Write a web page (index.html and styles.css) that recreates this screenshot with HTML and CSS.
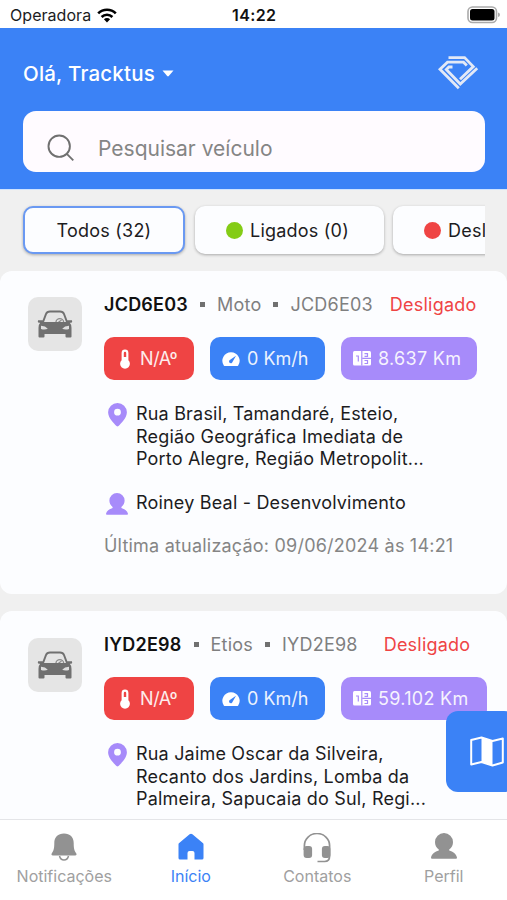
FILE: index.html
```html
<!DOCTYPE html>
<html lang="pt-BR">
<head>
<meta charset="utf-8">
<title>Veículos</title>
<link rel="stylesheet" href="styles.css">
</head>
<body>
<svg class="defs" aria-hidden="true">
  <symbol id="car" viewBox="0 0 36 28">
    <path fill="none" stroke="#707070" stroke-width="2" d="M6 12 9 4Q10 1.500 13 1.500H23Q26 1.500 27 4L30 12"/>
    <path fill="none" stroke="#8a8a8a" stroke-width="1.300" d="M19 12a3.800 3.300 0 0 1 7.600 0M21.500 12l3-1.800"/>
    <path fill="#707070" d="M1 10.300h4.500L7 12h22l1.500-1.700H35q.7 2.300-.7 2.500h-1.500q1.700 1.700 1.700 5v8.700q0 1-1 1h-4q-1 0-1-1V24h-21v2.500q0 1-1 1h-4q-1 0-1-1V17.800q0-3.300 1.700-5H1.700Q.3 12.600 1 10.300z"/>
    <path fill="#dedede" d="M4 15.800q4.500.2 6.800 3-3 1.300-6.800.2zM32 15.800q-4.500.2-6.800 3 3 1.300 6.800.2z"/>
  </symbol>
  <symbol id="thermo" viewBox="0 0 12 20">
    <path fill="#fff" d="M6 .5a3.400 3.400 0 0 0-3.400 3.400v7.300a4.900 4.900 0 1 0 6.800 0V3.900A3.400 3.400 0 0 0 6 .5z"/>
    <path fill="#ef4444" d="M4.800 3.900a1.200 1.200 0 0 1 2.400 0V8H4.800z"/>
  </symbol>
  <symbol id="gauge" viewBox="0 0 18 16">
    <path fill="#fff" d="M9 1.200a8.600 8.600 0 0 0-7.200 13.300q.5.500 1.200.5h12q.8 0 1.200-.5A8.600 8.600 0 0 0 9 1.200z"/>
    <path fill="#3b82f6" d="M14 4.800 10.600 10.800a1.800 1.800 0 1 1-2.400-2z"/>
  </symbol>
  <symbol id="odo" viewBox="0 0 18 15">
    <rect width="18" height="14.500" rx="1.500" fill="#fff"/>
    <path fill="none" stroke="#a78bfa" stroke-width="1.200" d="M3 5h2.300v5.500M8.800 0v14.500M11.500 2.700h3v2.600h-3M9.500 7.300H18M11.500 9.500h3v3h-3"/>
  </symbol>
  <symbol id="pin" viewBox="0 0 19 24">
    <path fill="#a78bfa" fill-rule="evenodd" d="M9.500 0A9.400 9.400 0 0 0 .1 9.300C.1 15 6 20.500 8.500 23q1 .8 2 0c2.500-2.500 8.400-8 8.400-13.700A9.400 9.400 0 0 0 9.500 0zm0 5.800a3.400 3.400 0 1 1 0 6.800 3.400 3.400 0 0 1 0-6.800z"/>
  </symbol>
  <symbol id="person" viewBox="0 0 26 26">
    <path fill="currentColor" d="M13 0a9 9 0 0 0-9 9c0 3 1.200 5.700 3.800 7.600v1C4 18.800.8 21 0 24.500q0 1.300 1 1.300h24q1 0 1-1.300c-.8-3.500-4-5.700-7.800-6.900v-1C20.800 14.700 22 12 22 9a9 9 0 0 0-9-9z"/>
  </symbol>
</svg>
<div class="app">
  <div class="status">
    <span class="carrier">Operadora</span>
    <svg class="wifi" viewBox="0 0 20 15"><g fill="none" stroke="#000" stroke-width="2.600"><path d="M1.200 5.400a12.500 12.500 0 0 1 17.600 0"/><path d="M4.600 9a7.700 7.700 0 0 1 10.800 0"/></g><path d="M10 14.500 6.900 11.300a4.400 4.400 0 0 1 6.200 0z"/></svg>
    <b class="clock">14:22</b>
    <svg class="battery" viewBox="0 0 34 18"><rect x="1" y="1" width="28.500" height="15.500" rx="4.500" fill="#fff" stroke="#aaa" stroke-width="1.600"/><rect x="3" y="3" width="24.500" height="11.500" rx="2.500"/><path fill="#aaa" d="M31 6.500q2 .6 2 2.300t-2 2.300z"/></svg>
  </div>
  <header class="header">
    <div class="hello">
      <span class="user">Olá, Tracktus</span>
      <svg class="caret" viewBox="0 0 12 7"><path fill="#fff" d="M.5.500h11L6.800 6q-.8.800-1.600 0z"/></svg>
      <svg class="logo" viewBox="0 0 42 36"><g fill="none" stroke="#e3e9f6" stroke-width="2.800"><path d="M11.500 2.600H27.600L36.300 11.600 23 24.300"/><path d="M29.800 10.500 26.500 7.200H10.500L3 14.300 21.800 33.200"/><path d="M40.200 13.200 23.300 29 9.300 14.600 11.900 12H15.500"/></g></svg>
    </div>
    <div class="search">
      <svg class="lens" viewBox="0 0 28 28"><g fill="none" stroke="#707070" stroke-width="1.900"><circle cx="12.200" cy="12.200" r="10.700"/><path d="m19.800 19.800 6.500 6.500"/></g></svg>
      <span class="placeholder">Pesquisar veículo</span>
    </div>
  </header>
  <div class="filters">
    <div class="chip chip-all"><span>Todos (32)</span></div>
    <div class="chip chip-on"><i class="dot green"></i><span>Ligados (0)</span></div>
    <div class="chip chip-off"><i class="dot red"></i><span>Desligados (32)</span></div>
  </div>
  <main class="list">
    <article class="card">
      <div class="thumb"><svg><use href="#car"/></svg></div>
      <div class="body">
        <div class="title"><b>JCD6E03</b><i></i><span>Moto</span><i></i><span class="plate">JCD6E03</span><em>Desligado</em></div>
        <div class="tags">
          <div class="tag temp"><svg><use href="#thermo"/></svg><span>N/Aº</span></div>
          <div class="tag speed"><svg><use href="#gauge"/></svg><span>0 Km/h</span></div>
          <div class="tag km"><svg><use href="#odo"/></svg><span>8.637 Km</span></div>
        </div>
        <div class="row"><svg class="pin"><use href="#pin"/></svg><p>Rua Brasil, Tamandaré, Esteio,<br>Região Geográfica Imediata de<br>Porto Alegre, Região Metropolit...</p></div>
        <div class="row driver"><svg class="face"><use href="#person"/></svg><p>Roiney Beal - Desenvolvimento</p></div>
        <div class="updated">Última atualização: 09/06/2024 às 14:21</div>
      </div>
    </article>
    <article class="card second">
      <div class="thumb"><svg><use href="#car"/></svg></div>
      <div class="body">
        <div class="title"><b>IYD2E98</b><i></i><span>Etios</span><i></i><span class="plate">IYD2E98</span><em>Desligado</em></div>
        <div class="tags">
          <div class="tag temp"><svg><use href="#thermo"/></svg><span>N/Aº</span></div>
          <div class="tag speed"><svg><use href="#gauge"/></svg><span>0 Km/h</span></div>
          <div class="tag km wide"><svg><use href="#odo"/></svg><span>59.102 Km</span></div>
        </div>
        <div class="row"><svg class="pin"><use href="#pin"/></svg><p>Rua Jaime Oscar da Silveira,<br>Recanto dos Jardins, Lomba da<br>Palmeira, Sapucaia do Sul, Regi...</p></div>
      </div>
    </article>
  </main>
  <nav class="nav">
    <div class="tab"><svg class="bell" viewBox="0 0 26 28"><path fill="currentColor" d="M13 .5c-6 0-9.700 3.700-9.700 9.500 0 5-.5 7.500-2.500 10.300-.8 1.300-.2 2.200 1 2.200h22.400c1.200 0 1.800-.9 1-2.200-2-2.800-2.500-5.300-2.500-10.300C22.700 4.200 19 .5 13 .5z"/><path fill="none" stroke="currentColor" stroke-width="1.500" d="M8.500 23q1 4 4.500 4t4.500-4"/></svg><span>Notificações</span></div>
    <div class="tab active"><svg viewBox="0 0 26 28"><path fill="currentColor" d="M11.600 1.200.9 10.200q-.4.400-.4 1V25q0 1.500 1.500 1.500h7.500V20q0-2 2-2h3q2 0 2 2v6.500H24q1.500 0 1.500-1.500V11.200q0-.6-.4-1L14.400 1.200q-1.400-1.100-2.800 0z"/></svg><span>Início</span></div>
    <div class="tab"><svg class="phones" viewBox="0 0 28 30"><path fill="none" stroke="currentColor" stroke-width="1.700" d="M1.400 17v-4.500a12.600 12 0 0 1 25.200 0V23q0 5.500-5 5.500H14.500"/><rect x=".6" y="13" width="8.500" height="12" rx="3" fill="currentColor"/><rect x="18.900" y="13" width="8.500" height="12" rx="3" fill="currentColor"/></svg><span>Contatos</span></div>
    <div class="tab"><svg class="profile"><use href="#person"/></svg><span>Perfil</span></div>
  </nav>
  <div class="fab"><svg viewBox="0 0 34 31"><path fill="none" stroke="#fff" stroke-width="2" stroke-linejoin="round" d="M1.200 4 11.500 1.500 22.500 5 32.800 2.500V26.500L22.500 29.500 11.500 26 1.200 28.500z"/><path fill="#fff" d="M11.500 1.500 22.500 5v24.500l-11-3.500z"/></svg></div>
</div>
</body>
</html>
```
FILE: styles.css
```css
* { box-sizing: border-box; }
body { margin: 0; font-family: Inter, "Liberation Sans", sans-serif; }
p { margin: 0; }
svg { display: block; flex: none; }
.defs { position: absolute; width: 0; height: 0; }
.app { position: relative; width: 507px; height: 900px; overflow: hidden; display: flex; flex-direction: column; background: #f0f0f0; color: #1c1c1e; white-space: nowrap; }

.status { flex: none; height: 28px; display: grid; grid-template-columns: 81px 20px 1fr 34px; column-gap: 6px; padding: 2px 6px 0 10px; align-items: center; background: #fff; font-size: 16px; }
.carrier { letter-spacing: 0.05px; }
.wifi { width: 20px; height: 15px; }
.clock { padding-left: 109px; color: #111; font-weight: 600; letter-spacing: 0.4px; }
.battery { width: 34px; height: 18px; }

.header { flex: none; height: 162px; padding: 27px 22px 0 23px; background: #3b82f6; border-bottom: 1px solid #cfe3ff; }
.hello { display: flex; align-items: center; height: 36px; color: #fff; }
.user { font-size: 20.500px; font-weight: 500; letter-spacing: 0.2px; }
.caret { width: 12px; height: 7px; margin-left: 7px; }
.logo { width: 42px; height: 36px; margin: 0 6px 0 auto; }
.search { display: flex; align-items: center; height: 61px; margin-top: 20px; padding: 13px 24px 0; border-radius: 13px; background: #fffbff; }
.lens { width: 28px; height: 28px; }
.placeholder { margin-left: 23px; font-size: 21px; color: #858585; }

.filters { flex: none; display: flex; gap: 9px; height: 81px; margin: 0 22px 0 21px; padding: 16px 0 0 2px; overflow: hidden; }
.chip { flex: none; display: flex; align-items: center; justify-content: center; height: 48px; border-radius: 10px; background: #fcfdff; font-size: 18px; letter-spacing: 0.22px; box-shadow: 0 1px 3px rgba(0, 0, 0, 0.3); }
.chip-all { width: 162px; margin-right: 1px; border: 2px solid #6a99f2; }
.chip-on { width: 189px; padding-right: 4px; }
.chip-off { width: 210px; justify-content: flex-start; padding-left: 31px; }
.dot { width: 17px; height: 17px; margin-right: 7px; border-radius: 50%; }
.green { background: #84cc16; }
.red { background: #ef4444; }

.list { flex: 1; min-height: 0; overflow: hidden; display: flex; flex-direction: column; gap: 17px; }
.card { flex: none; display: flex; height: 323px; padding: 20px 0 0 28px; border-radius: 12px; background: #fcfdff; }
.thumb { display: flex; align-items: center; justify-content: center; width: 54px; height: 54px; margin-top: 6px; border-radius: 10px; background: #e5e5e5; }
.second .thumb { margin-top: 7px; }
.thumb svg { width: 36px; height: 28px; }
.body { margin-left: 22px; }
.title { display: flex; align-items: center; height: 26px; font-size: 18px; letter-spacing: 0.22px; color: #7f7f7f; }
.title b { color: #111; font-weight: 600; }
.title i { width: 5px; height: 5px; margin: 0 12px; background: #707070; }
.title em { margin-left: 17px; font-style: normal; color: #ef4444; }
.second .title em { margin-left: 26px; }
.tags { display: flex; gap: 16px; margin-top: 20px; }
.tag { display: flex; align-items: center; height: 43px; border-radius: 10px; color: #fff; font-size: 18px; }
.temp { width: 90px; padding-left: 15px; background: #ef4444; letter-spacing: -0.4px; }
.temp svg { width: 12px; height: 20px; margin-right: 9px; }
.speed { width: 115px; padding-left: 12px; background: #3b82f6; }
.speed svg { width: 18px; height: 16px; margin-right: 7px; }
.km { width: 136px; padding-left: 12px; background: #a78bfa; letter-spacing: 0.3px; }
.km svg { width: 18px; height: 15px; margin-right: 7px; }
.km span, .speed span, .temp span { opacity: 0.9; }
.wide { width: 146px; }
.row { display: flex; margin-top: 22px; font-size: 18px; line-height: 22.670px; letter-spacing: 0.19px; }
.row p { margin: 1px 0 -1px 9px; }
.pin { width: 19px; height: 24px; margin: 1px 0 0 4px; }
.driver { margin-top: 22px; }
.face { width: 22px; height: 22px; margin: 1px 0 0 2px; color: #a78bfa; }
.driver p { margin: 0 0 0 8px; }
.updated { margin-top: 20px; font-size: 18px; line-height: 22px; letter-spacing: 0.21px; color: #858585; }

.nav { flex: none; display: grid; grid-template-columns: repeat(4, 1fr); height: 81px; padding-left: 1px; border-top: 1px solid #e4e5e8; background: #fff; }
.tab { display: flex; flex-direction: column; align-items: center; padding-top: 13px; color: #929292; font-size: 16px; }
.tab svg { width: 26px; height: 28px; }
.tab .phones { width: 28px; height: 30px; margin-bottom: -2px; }
.tab .profile { height: 26px; margin-bottom: 2px; }
.tab span { margin-top: 5px; line-height: 20px; color: #a0a0a0; }
.tab.active, .tab.active span { color: #3b82f6; }
.fab { position: absolute; left: 446px; top: 711px; width: 70px; height: 81px; display: flex; align-items: center; padding-left: 24px; border-radius: 12px; background: #3b82f6; }
.fab svg { width: 34px; height: 31px; }
```
